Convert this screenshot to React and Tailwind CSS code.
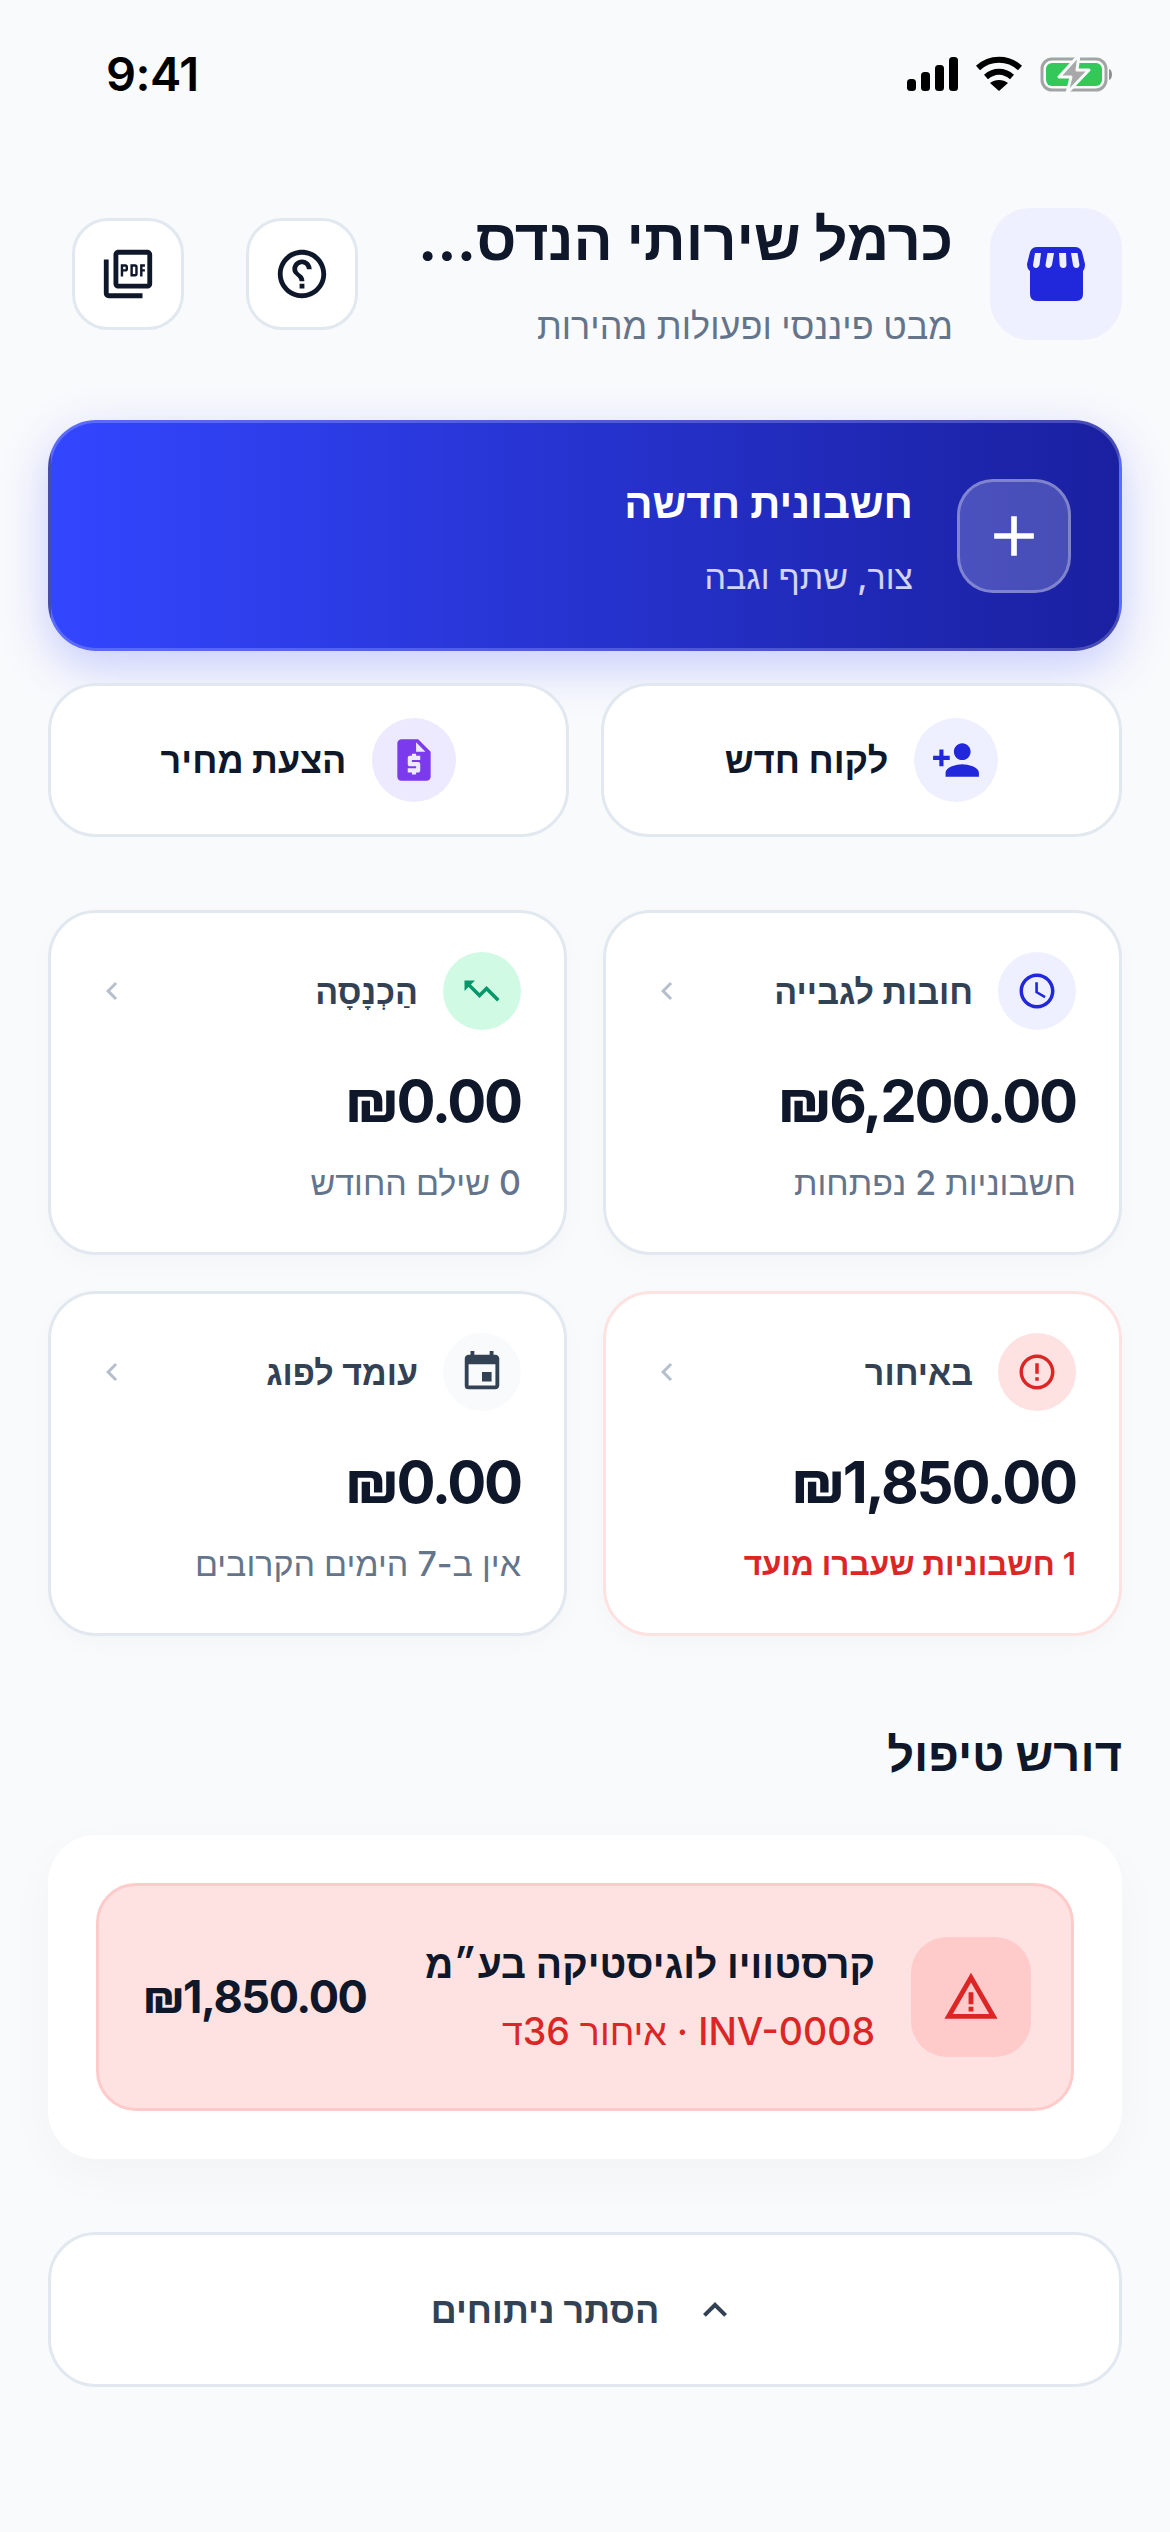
import React from 'react';
import {
  MdHelpOutline,
  MdOutlinePictureAsPdf,
  MdAdd,
  MdPersonAdd,
  MdRequestQuote,
  MdAccessTime,
  MdTrendingUp,
  MdErrorOutline,
  MdEvent,
  MdChevronLeft,
  MdWarningAmber,
  MdKeyboardArrowUp,
} from 'react-icons/md';

const font = 'font-["Inter","Liberation_Sans",sans-serif]';

function StatusBar() {
  return (
    <div dir="ltr" className="h-[148px] flex items-center justify-between pl-[58px] pr-[7px]">
      <span className="text-[47px] font-semibold text-black tracking-[-0.5px]">9:41</span>
      <div className="flex items-center gap-[17px]">
        <svg width="51" height="34" viewBox="0 0 51 34" fill="#000">
          <rect x="0" y="22" width="9" height="12" rx="3.5" />
          <rect x="14" y="15" width="9" height="19" rx="3.5" />
          <rect x="28" y="8" width="9" height="26" rx="3.5" />
          <rect x="42" y="0" width="9" height="34" rx="3.5" />
        </svg>
        <svg width="48" height="36" viewBox="0 0 48 36" fill="none">
          <path d="M3 12 C15 1 33 1 45 12" stroke="#000" strokeWidth="6" />
          <path d="M11 21 C19 14 29 14 37 21" stroke="#000" strokeWidth="6" />
          <path d="M24 35 L15 27 C20 23 28 23 33 27 Z" fill="#000" />
        </svg>
        <svg width="75" height="40" viewBox="0 0 75 40" fill="none">
          <rect x="2" y="5" width="64" height="31" rx="10" stroke="#a3a3a3" strokeWidth="3" />
          <rect x="6" y="9" width="56" height="23" rx="6" fill="#34c759" />
          <path d="M69 15 C73 16 73 25 69 26 Z" fill="#8e8e8e" />
          <path d="M39 1 L19 23 H31 L27 39 L49 16 H37 Z" fill="#a8a8a8" stroke="#f9fafc" strokeWidth="3" strokeLinejoin="round" />
        </svg>
      </div>
    </div>
  );
}

// solid shop front with a striped awning
function StoreIcon() {
  return (
    <svg width="58" height="54" viewBox="0 0 58 54" fill="#2128dc">
      <path d="M3 5 Q5 0 10 0 H48 Q53 0 55 5 L58 17 Q58 22 56 24 V47 Q56 54 49 54 H10 Q3 54 3 47 V24 Q0 22 0 17 Z" />
      <path d="M8 6 H14 L12.5 18 Q11 21.5 9 21 Q6 20.5 6 18 Z" fill="#eef0ff" />
      <path d="M20.5 6 H27 L25 18 Q23.5 21.5 21.5 21 Q18.5 20.5 18.5 18 Z" fill="#eef0ff" />
      <path d="M32 6 H39 L39.5 18 Q39 21 36.5 21 Q33 21 32.7 18 Z" fill="#eef0ff" />
      <path d="M44 6 H50.5 L52.5 18 Q52 21 49.5 21 Q46.5 21 46 18 Z" fill="#eef0ff" />
    </svg>
  );
}

function IconButton({ children }) {
  return (
    <button className="w-[112px] h-[112px] shrink-0 rounded-[36px] bg-white border-[3px] border-[#e2e8f0] flex items-center justify-center text-[#0f172a]">
      {children}
    </button>
  );
}

function QuickAction({ icon, tint, label }) {
  return (
    <button className="flex-1 h-[154px] rounded-[48px] bg-white border-[3px] border-[#e2e8f0] flex items-center justify-center gap-[26px]">
      <span className={`w-[84px] h-[84px] rounded-full flex items-center justify-center ${tint}`}>{icon}</span>
      <span className="text-[36px] font-bold text-[#0f172a]">{label}</span>
    </button>
  );
}

function StatCard({ icon, tint, label, amount, sub, subColor = 'text-[34px] text-[#64748b] font-medium', border = 'border-[#e2e8f0]' }) {
  return (
    <div className={`flex-1 h-[345px] rounded-[48px] bg-white border-[3px] ${border} pt-[39px] pr-[43px] pl-[43px] shadow-[0_8px_24px_rgba(15,23,42,0.025)]`}>
      <div className="flex items-center gap-[25px]">
        <span className={`w-[78px] h-[78px] shrink-0 rounded-full flex items-center justify-center ${tint}`}>{icon}</span>
        <span className="flex-1 text-[34px] font-semibold text-[#334155]">{label}</span>
        <MdChevronLeft size={36} className="text-[#b6bfcc]" />
      </div>
      <div className="mt-[36px] text-[58px] leading-[70px] font-bold tracking-[-2.2px] text-[#0f172a] text-right">{amount}</div>
      <div className={`mt-[27px] leading-[40px] ${subColor}`}>{sub}</div>
    </div>
  );
}

export default function App() {
  return (
    <div dir="rtl" className={`${font} w-[1170px] min-h-[2532px] bg-[#f9fafc] px-12`}>
      <StatusBar />

      {/* Header */}
      <div className="mt-[60px] h-[132px] flex items-center pl-[24px]">
        <div className="w-[132px] h-[132px] shrink-0 rounded-[40px] bg-[#eef0ff] flex items-center justify-center">
          <StoreIcon />
        </div>
        <div className="flex-1 min-w-0 mr-[37px] ml-[60px]">
          <div className="text-[58px] leading-[74px] font-bold text-[#0f172a] whitespace-nowrap">כרמל שירותי הנדס...</div>
          <div className="mt-[30px] text-[36px] leading-[40px] font-medium text-[#64748b]">מבט פיננסי ופעולות מהירות</div>
        </div>
        <div className="flex gap-[62px]">
          <IconButton><MdHelpOutline size={58} className="-scale-x-100" /></IconButton>
          <IconButton><MdOutlinePictureAsPdf size={58} /></IconButton>
        </div>
      </div>

      {/* New invoice */}
      <div className="mt-[80px] h-[231px] rounded-[48px] border-[3px] border-white/20 bg-gradient-to-l from-[#1a20a0] to-[#3346ff] flex items-center pr-[48px] gap-[44px] shadow-[0_16px_48px_rgba(51,70,255,0.25)]">
        <span className="w-[114px] h-[114px] rounded-[36px] bg-white/20 border-[3px] border-white/30 flex items-center justify-center">
          <MdAdd size={68} className="text-white" />
        </span>
        <div>
          <div className="text-[42px] leading-[56px] font-bold text-white">חשבונית חדשה</div>
          <div className="mt-[26px] text-[34px] leading-[40px] font-medium text-white/80">צור, שתף וגבה</div>
        </div>
      </div>

      <div className="mt-[32px] flex gap-[32px]">
        <QuickAction tint="bg-[#eef0ff]" label="לקוח חדש" icon={<MdPersonAdd size={50} className="text-[#2128dc]" />} />
        <QuickAction tint="bg-[#ede9fe]" label="הצעת מחיר" icon={<MdRequestQuote size={50} className="text-[#7c3aed]" />} />
      </div>

      {/* Stats */}
      <div className="mt-[73px] grid grid-cols-2 gap-x-[36px] gap-y-[36px]">
        <StatCard
          tint="bg-[#eef0ff]"
          icon={<MdAccessTime size={42} className="text-[#2128dc]" />}
          label="חובות לגבייה"
          amount="₪6,200.00"
          sub="חשבוניות 2 נפתחות"
        />
        <StatCard
          tint="bg-[#d1fae5]"
          icon={<MdTrendingUp size={42} className="text-[#059669] -scale-x-100" />}
          label="הַכְנָסָה"
          amount="₪0.00"
          sub="0 שילם החודש"
        />
        <StatCard
          tint="bg-[#fee2e2]"
          border="border-[#fee2e2]"
          icon={<MdErrorOutline size={42} className="text-[#dc2626]" />}
          label="באיחור"
          amount="₪1,850.00"
          sub="1 חשבוניות שעברו מועד"
          subColor="text-[31.5px] text-[#dc2626] font-semibold"
        />
        <StatCard
          tint="bg-[#f8fafc]"
          icon={<MdEvent size={46} className="text-[#334155]" />}
          label="עומד לפוג"
          amount="₪0.00"
          sub="אין ב-7 הימים הקרובים"
        />
      </div>

      {/* Attention */}
      <h2 className="mt-[88px] text-[47px] leading-[60px] font-bold text-[#0f172a]">דורש טיפול</h2>
      <div className="mt-[51px] rounded-[48px] bg-white p-[48px] shadow-[0_16px_48px_rgba(15,23,42,0.03)]">
        <div className="h-[228px] rounded-[40px] bg-[#fee2e2] border-[3px] border-[#fecaca] flex items-center pr-[40px] pl-[44px] gap-[36px]">
          <span className="w-[120px] h-[120px] shrink-0 rounded-[36px] bg-[#fecaca] flex items-center justify-center">
            <MdWarningAmber size={58} className="text-[#dc2626]" />
          </span>
          <div className="flex-1">
            <div className="text-[39px] leading-[48px] font-semibold text-[#0f172a]">קרסטוויו לוגיסטיקה בע״מ</div>
            <div className="mt-[22px] text-[37.5px] leading-[44px] font-medium text-[#dc2626]">INV-0008 · איחור 36ד</div>
          </div>
          <div className="text-[45px] font-bold tracking-[-1.4px] text-[#0f172a]">₪1,850.00</div>
        </div>
      </div>

      <button className="mt-[73px] w-full h-[155px] rounded-[48px] bg-white border-[3px] border-[#e2e8f0] flex items-center justify-center gap-[32px]">
        <MdKeyboardArrowUp size={48} className="text-[#334155]" />
        <span className="text-[36px] font-semibold text-[#334155]">הסתר ניתוחים</span>
      </button>
    </div>
  );
}
